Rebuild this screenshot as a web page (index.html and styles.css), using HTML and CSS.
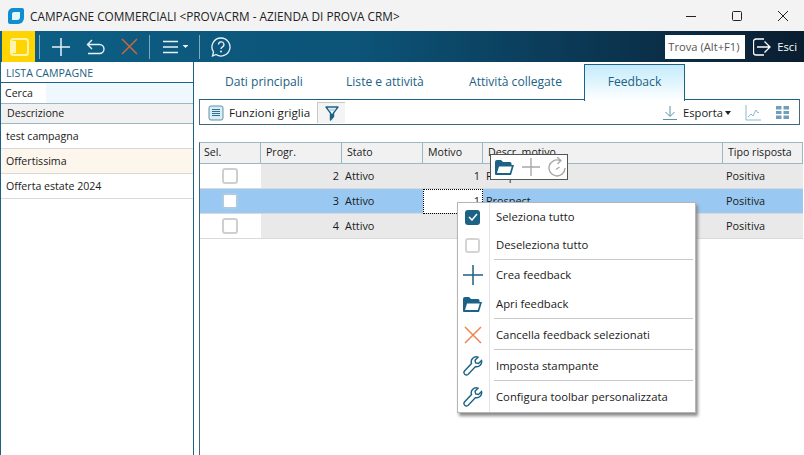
FILE: index.html
```html
<!DOCTYPE html>
<html>

<head>
  <title>Campagne commerciali</title>
  <link rel="stylesheet" href="styles.css">
</head>

<body>
  <div class="titlebar">
    <svg class="applogo" width="16" height="16" viewBox="0 0 16 16"><path d="M5 0h9a2 2 0 0 1 2 2v8a6 6 0 0 1-6 6H2a2 2 0 0 1-2-2V5a5 5 0 0 1 5-5z" fill="#0f8fd0"/><path d="M6 4h6v5a3 3 0 0 1-3 3H4V6a2 2 0 0 1 2-2z" fill="#e4f5fc"/></svg>
    <span class="apptitle">CAMPAGNE COMMERCIALI &lt;PROVACRM - AZIENDA DI PROVA CRM&gt;</span>
    <div class="winbtns">
      <svg width="12" height="12" viewBox="0 0 12 12"><path d="M1 6.500h10" stroke="#222" fill="none"/></svg>
      <svg width="12" height="12" viewBox="0 0 12 12"><rect x="1.500" y="1.500" width="9" height="9" rx="1" stroke="#222" fill="none"/></svg>
      <svg width="12" height="12" viewBox="0 0 12 12"><path d="M1 1l10 10M11 1L1 11" stroke="#222" fill="none"/></svg>
    </div>
  </div>

  <div class="toolbar">
    <div class="toggle">
      <svg width="19" height="18" viewBox="0 0 19 18"><rect x="1" y="1" width="17" height="16" rx="2.500" fill="#ffd400" stroke="#fff3b0" stroke-width="2"/><path d="M2 3h4v12H2z" fill="#fff3b0"/></svg>
    </div>
    <span class="sep sep-first"></span>
    <svg class="t-plus" width="20" height="20" viewBox="0 0 20 20"><path d="M10 1v18M1 10h18" stroke="#e8f1f6" stroke-width="1.500" fill="none"/></svg>
    <svg class="t-undo" width="19" height="18" viewBox="0 0 19 18"><path d="M6 2L1.500 6.500 6 11M2 6.500h11.500a4 4 0 0 1 0 9H2" stroke="#e8f1f6" stroke-width="1.400" fill="none"/></svg>
    <svg class="t-del" width="17" height="17" viewBox="0 0 17 17"><path d="M1 1l15 15M16 1L1 16" stroke="#c8683a" stroke-width="1.500" fill="none"/></svg>
    <span class="sep sep-del"></span>
    <svg class="t-menu" width="25" height="14" viewBox="0 0 25 14"><path d="M0 1.500h15M0 7h15M0 12.500h15" stroke="#e8f1f6" stroke-width="1.400" fill="none"/><path d="M19.500 5h6l-3 3z" fill="#e8f1f6"/></svg>
    <span class="sep sep-menu"></span>
    <svg class="t-help" width="20" height="20" viewBox="0 0 20 20"><path d="M10 1a9 9 0 1 1-5 16.500L1.500 19l1-4A9 9 0 0 1 10 1z" stroke="#e8f1f6" stroke-width="1.300" fill="none"/><path d="M7.500 7.500a2.700 2.700 0 1 1 4 2.400c-1 .6-1.500 1.100-1.500 2.200" stroke="#e8f1f6" stroke-width="1.300" fill="none"/><circle cx="10" cy="14.500" r="1" fill="#e8f1f6"/></svg>
    <div class="find">Trova (Alt+F1)</div>
    <svg class="exiticon" width="18" height="18" viewBox="0 0 18 18"><path d="M11 1H3a2.500 2.500 0 0 0-2.500 2.500v11A2.500 2.500 0 0 0 3 17h8M4 9h13M11.500 3.500L17 9l-5.500 5.500" stroke="#fff" stroke-width="1.300" fill="none"/></svg>
    <span class="exit">Esci</span>
  </div>

  <div class="content">
    <div class="sidebar">
      <div class="sidetitle">LISTA CAMPAGNE</div>
      <div class="search"><span class="searchlabel">Cerca</span></div>
      <div class="sidehead">Descrizione</div>
      <div class="siderow">test campagna</div>
      <div class="siderow siderow-alt">Offertissima</div>
      <div class="siderow">Offerta estate 2024</div>
    </div>

    <div class="main">
      <div class="tabs">
        <div class="tab tab-first">Dati principali</div>
        <div class="tab tab-second">Liste e attività</div>
        <div class="tab tab-third">Attività collegate</div>
        <div class="tab tab-active">Feedback</div>
      </div>

      <div class="gridbar">
        <svg class="barlist" width="16" height="16" viewBox="0 0 16 16"><rect x="1" y="1" width="14" height="14" rx="2" fill="#dcecf3" stroke="#5b93ad"/><path d="M4 4.500h8M4 6.500h8M4 8.500h8M4 10.500h8" stroke="#2f6f8f" fill="none"/></svg>
        <span class="barlabel">Funzioni griglia</span>
        <div class="filterbtn">
          <svg width="14" height="15" viewBox="0 0 14 15"><path d="M1 1h12L8.500 7v3.500L5.500 14V7z" fill="#fff" stroke="#1b6285" stroke-width="1.400" stroke-linejoin="round"/><path d="M6 7.500h2.500v3L6 13z" fill="#1b6285"/><path d="M3 2.500h8L9 5H5z" fill="#bcd9e7"/></svg>
        </div>
        <div class="barright">
          <svg width="16" height="16" viewBox="0 0 16 16"><path d="M8 1v10M3.500 7L8 11.500 12.500 7M1 14.500h14" stroke="#5b93ad" fill="none"/></svg>
          <span class="exportlabel">Esporta</span>
          <span class="caret"></span>
          <svg class="chart" width="16" height="16" viewBox="0 0 16 16"><path d="M1 0v15h15" stroke="#8fb9cd" fill="none"/><path d="M3 12l3-3 2 2 3-6 2 3 1-1" stroke="#8fb9cd" fill="none"/></svg>
          <svg class="gridicon" width="13" height="13" viewBox="0 0 13 13"><path d="M0 0h5.500v3.500H0zM7.500 0H13v3.500H7.500zM0 5h5.500v3H0zM7.500 5H13v3H7.500zM0 9.500h5.500V13H0zM7.500 9.500H13V13H7.500z" fill="#6f9fb6"/></svg>
        </div>
      </div>

      <div class="grid">
        <div class="gh">Sel.</div>
        <div class="gh">Progr.</div>
        <div class="gh">Stato</div>
        <div class="gh">Motivo</div>
        <div class="gh">Descr. motivo</div>
        <div class="gh">Tipo risposta</div>

        <div class="gc gc-check"><span class="check"></span></div>
        <div class="gc gc-num gc-grey">2</div>
        <div class="gc gc-grey">Attivo</div>
        <div class="gc gc-num gc-grey">1</div>
        <div class="gc gc-grey">Prospect</div>
        <div class="gc gc-grey">Positiva</div>

        <div class="gc gc-check gc-sel"><span class="check check-sel"></span></div>
        <div class="gc gc-num gc-sel">3</div>
        <div class="gc gc-sel">Attivo</div>
        <div class="gc gc-num gc-focus">1</div>
        <div class="gc gc-sel">Prospect</div>
        <div class="gc gc-sel">Positiva</div>

        <div class="gc gc-check"><span class="check"></span></div>
        <div class="gc gc-num gc-grey">4</div>
        <div class="gc gc-grey">Attivo</div>
        <div class="gc gc-num gc-grey"></div>
        <div class="gc gc-grey"></div>
        <div class="gc gc-grey">Positiva</div>
      </div>
    </div>
  </div>

  <div class="minibar">
    <svg width="19" height="15" viewBox="0 0 19 15"><path d="M0 14V2a2 2 0 0 1 2-2h4l2 2h7a1.500 1.500 0 0 1 1.500 1.500V5H19l-3 10H1a1 1 0 0 1-1-1z" fill="#1b6285"/><path d="M4 6.500h12.800L14.800 13H2z" fill="#fff"/></svg>
    <svg width="20" height="20" viewBox="0 0 20 20"><path d="M10 1v18M1 10h18" stroke="#a8a8a8" stroke-width="1.400" fill="none"/></svg>
    <svg width="18" height="20" viewBox="0 0 18 20"><path d="M12 3.500A8 8 0 1 0 17 11" stroke="#a8a8a8" stroke-width="1.400" fill="none"/><path d="M9 0l4 3.500-3.500 3.500M11.500 10L8 12.500" stroke="#a8a8a8" stroke-width="1.300" fill="none"/></svg>
  </div>

  <div class="menu">
    <div class="mi mi-check">
      <div class="mi-icon"><span class="menucheck"><svg width="10" height="8" viewBox="0 0 10 8"><path d="M1 4l3 3 5-6" stroke="#fff" stroke-width="1.500" fill="none"/></svg></span></div>
      <span class="mi-text">Seleziona tutto</span>
    </div>
    <div class="mi mi-uncheck mi-line">
      <div class="mi-icon"><span class="menuuncheck"></span></div>
      <span class="mi-text">Deseleziona tutto</span>
    </div>
    <div class="mi mi-create">
      <div class="mi-icon"><svg width="20" height="20" viewBox="0 0 20 20"><path d="M10 0v20M0 10h20" stroke="#1b6285" stroke-width="1.500" fill="none"/></svg></div>
      <span class="mi-text">Crea feedback</span>
    </div>
    <div class="mi mi-open mi-line">
      <div class="mi-icon"><svg width="19" height="15" viewBox="0 0 19 15"><path d="M0 14V2a2 2 0 0 1 2-2h4l2 2h7a1.500 1.500 0 0 1 1.500 1.500V5H19l-3 10H1a1 1 0 0 1-1-1z" fill="#1b6285"/><path d="M4 6.500h12.800L14.800 13H2z" fill="#fff"/></svg></div>
      <span class="mi-text">Apri feedback</span>
    </div>
    <div class="mi mi-line">
      <div class="mi-icon"><svg width="18" height="18" viewBox="0 0 18 18"><path d="M1 1l16 16M17 1L1 17" stroke="#ec8550" stroke-width="1.500" fill="none"/></svg></div>
      <span class="mi-text">Cancella feedback selezionati</span>
    </div>
    <div class="mi mi-line">
      <div class="mi-icon"><svg width="20" height="20" viewBox="0 0 20 20"><path d="M18.500 4.500l-3 3-2.800-.5-.7-2.800 3-3a5 5 0 0 0-6.500 6.300L1.500 15a2.500 2.500 0 0 0 3.500 3.500l7.500-7.900a5 5 0 0 0 6-6.100z" stroke="#1b6285" stroke-width="1.400" fill="#fff"/></svg></div>
      <span class="mi-text">Imposta stampante</span>
    </div>
    <div class="mi">
      <div class="mi-icon"><svg width="20" height="20" viewBox="0 0 20 20"><path d="M18.500 4.500l-3 3-2.800-.5-.7-2.800 3-3a5 5 0 0 0-6.500 6.300L1.500 15a2.500 2.500 0 0 0 3.500 3.500l7.500-7.900a5 5 0 0 0 6-6.100z" stroke="#1b6285" stroke-width="1.400" fill="#fff"/></svg></div>
      <span class="mi-text">Configura toolbar personalizzata</span>
    </div>
  </div>
</body>

</html>
```

FILE: styles.css
```css
html, body {
  margin: 0;
  padding: 0;
}
body {
  width: 804px;
  height: 455px;
  overflow: hidden;
  background: #fff;
  color: #1a1a1a;
  font-family: "Open Sans", "Noto Sans", sans-serif;
  font-size: 11.2px;
  position: relative;
}
svg {
  display: block;
  flex: none;
}

.titlebar {
  height: 31px;
  background: #f3f3f3;
  display: flex;
  align-items: center;
  padding-left: 8px;
}
.apptitle {
  margin-left: 6px;
  font-size: 11.8px;
  color: #222;
}
.winbtns {
  margin-left: auto;
  display: flex;
  gap: 34px;
  padding-right: 15px;
}

.toolbar {
  height: 31px;
  background: linear-gradient(to right, #0d5f86, #0c5377 45%, #0a1d30);
  display: flex;
  align-items: center;
  color: #fff;
}
.toggle {
  width: 33px;
  height: 31px;
  margin-left: 2px;
  padding-left: 8px;
  box-sizing: border-box;
  background: #ffd400;
  display: flex;
  align-items: center;
}
.sep {
  width: 1px;
  height: 24px;
  background: #7fa9bd;
}
.sep-first {
  margin-left: 4px;
}
.t-plus {
  margin-left: 11px;
}
.t-undo {
  margin-left: 15px;
}
.t-del {
  margin-left: 16px;
}
.sep-del {
  margin-left: 11px;
}
.t-menu {
  margin-left: 13px;
}
.sep-menu {
  margin-left: 11px;
}
.t-help {
  margin-left: 11px;
}
.find {
  margin-left: auto;
  width: 80px;
  height: 24px;
  line-height: 24px;
  background: #fff;
  color: #555;
  padding-left: 3px;
  box-sizing: border-box;
  white-space: nowrap;
}
.exiticon {
  margin-left: 8px;
}
.exit {
  margin: 0 7px 0 6px;
}

.content {
  display: flex;
  height: 393px;
}

.sidebar {
  width: 192px;
  flex: none;
  border-right: 1px solid #1b6285;
  border-left: 1px solid #1b6285;
  font-size: 10.6px;
}
.sidetitle {
  height: 19px;
  line-height: 21px;
  padding-left: 5px;
  color: #1b6285;
  font-size: 10.6px;
  border-bottom: 1px solid #1b6285;
  margin-top: 1px;
}
.search {
  height: 20px;
  background: #eef8fe;
  border-bottom: 1px solid #9db7c5;
}
.searchlabel {
  display: block;
  width: 45px;
  height: 20px;
  line-height: 20px;
  padding-left: 4px;
  box-sizing: border-box;
  background: #fff;
}
.sidehead {
  height: 19px;
  line-height: 19px;
  padding-left: 6px;
  background: #f1f1f1;
  border-bottom: 1px solid #9db7c5;
}
.siderow {
  height: 24px;
  line-height: 24px;
  padding-left: 5px;
  border-bottom: 1px solid #d9d9d9;
}
.siderow-alt {
  background: #fdf6ec;
}

.main {
  flex: 1;
  min-width: 0;
  padding-left: 5px;
  display: flex;
  flex-direction: column;
}
.tabs {
  display: flex;
  height: 38px;
  box-sizing: border-box;
  color: #1b6285;
  font-size: 12.1px;
}
.tab {
  line-height: 38px;
  padding-top: 1px;
  white-space: nowrap;
}
.tab-first {
  margin-left: 26px;
  width: 121px;
}
.tab-second {
  width: 123px;
}
.tab-third {
  width: 115px;
}
.tab-active {
  width: 101px;
  height: 37px;
  margin-top: 2px;
  padding-top: 0;
  line-height: 34px;
  box-sizing: border-box;
  text-align: center;
  background: linear-gradient(to bottom, #c4ebfb, #fff);
  border: 1px solid #1b6285;
  border-bottom: none;
  position: relative;
  z-index: 1;
}

.gridbar {
  width: 601px;
  height: 26px;
  box-sizing: border-box;
  border: 1px solid #47687a;
  border-top-color: #1b6285;
  margin-top: -1px;
  padding: 1px 0 0 8px;
  display: flex;
  align-items: center;
}
.barlabel {
  margin-left: 5px;
  font-size: 11.6px;
}
.filterbtn {
  margin-left: 7px;
  width: 28px;
  height: 21px;
  background: #f4f4f4;
  border-left: 1px solid #c8c8c8;
  border-top: 1px solid #c8c8c8;
  box-sizing: border-box;
  display: flex;
  align-items: center;
  justify-content: center;
}
.barright {
  margin-left: auto;
  display: flex;
  align-items: center;
  padding-right: 10px;
}
.exportlabel {
  margin-left: 5px;
  width: 38px;
  white-space: nowrap;
}
.caret {
  margin-left: 4px;
  border: 3px solid transparent;
  border-top: 4px solid #222;
  border-bottom: none;
}
.chart {
  margin-left: 14px;
}
.gridicon {
  margin-left: 15px;
}

.grid {
  flex: 1;
  margin-top: 17px;
  width: 604px;
  border-left: 1px solid #47687a;
  box-sizing: border-box;
  display: grid;
  grid-template-columns: 61px 81px 81px 60px 240px 80px;
  grid-auto-rows: 25px;
  grid-template-rows: 21px;
  border-top: 1px solid #9db7c5;
  align-content: start;
  font-size: 10.9px;
}
.gh {
  background: #f1f1f1;
  border-right: 1px solid #9db7c5;
  border-bottom: 1px solid #9db7c5;
  line-height: 19px;
  padding-left: 4px;
  box-sizing: border-box;
  font-size: 10.6px;
}
.gh:nth-child(n+2) {
  padding-left: 5px;
}
.gc {
  line-height: 24px;
  padding: 0 3px;
  border-bottom: 1px solid #d9d9d9;
  box-sizing: border-box;
  overflow: hidden;
  white-space: nowrap;
}
.gc-grey {
  background: #e9e9e9;
}
.gc-sel {
  background: #99c9f2;
}
.gc-num {
  text-align: right;
}
.gc-focus {
  background: #fff;
  outline: 1px dotted #000;
  outline-offset: -1px;
}
.gc-check {
  display: flex;
  align-items: center;
  justify-content: center;
  padding-right: 5px;
}
.check {
  width: 12px;
  height: 12px;
  border: 2px solid #cfcfcf;
  border-radius: 3px;
  background: #fff;
  display: block;
}
.check-sel {
  border-color: #aecbe2;
}

.minibar {
  position: absolute;
  left: 490px;
  top: 154px;
  width: 78px;
  height: 26px;
  box-sizing: border-box;
  background: #fff;
  border: 1px solid #555;
  display: flex;
  align-items: center;
  gap: 7px;
  padding-left: 4px;
}

.menu {
  position: absolute;
  left: 457px;
  top: 202px;
  width: 239px;
  height: 211px;
  box-sizing: border-box;
  background: #fff;
  border: 1px solid #b5b5b5;
  box-shadow: 2px 3px 3px #8a8a8a;
  padding-right: 2px;
  font-size: 11.3px;
}
.mi {
  display: flex;
  height: 31px;
  align-items: center;
  position: relative;
}
.mi-check {
  height: 28px;
}
.mi-uncheck,
.mi-open {
  height: 29px;
}
.mi-create {
  height: 30px;
}
.mi-icon {
  width: 32px;
  height: 100%;
  box-sizing: border-box;
  padding-right: 2px;
  flex: none;
  display: flex;
  align-items: center;
  justify-content: center;
  border-right: 1px solid #e4e4e4;
}
.mi-text {
  margin-left: 6px;
  white-space: nowrap;
}
.mi-check .mi-text,
.mi-uncheck .mi-text,
.mi-create .mi-text,
.mi-open .mi-text {
  margin-bottom: 2px;
}
.mi-line::after {
  content: "";
  position: absolute;
  left: 36px;
  right: 0;
  bottom: 0;
  height: 1px;
  background: #c8c8c8;
}
.menucheck {
  width: 15px;
  height: 15px;
  border-radius: 3px;
  background: #1b6285;
  display: flex;
  align-items: center;
  justify-content: center;
}
.menuuncheck {
  width: 11px;
  height: 11px;
  border: 2px solid #d4d4d4;
  border-radius: 3px;
  display: block;
}
```
